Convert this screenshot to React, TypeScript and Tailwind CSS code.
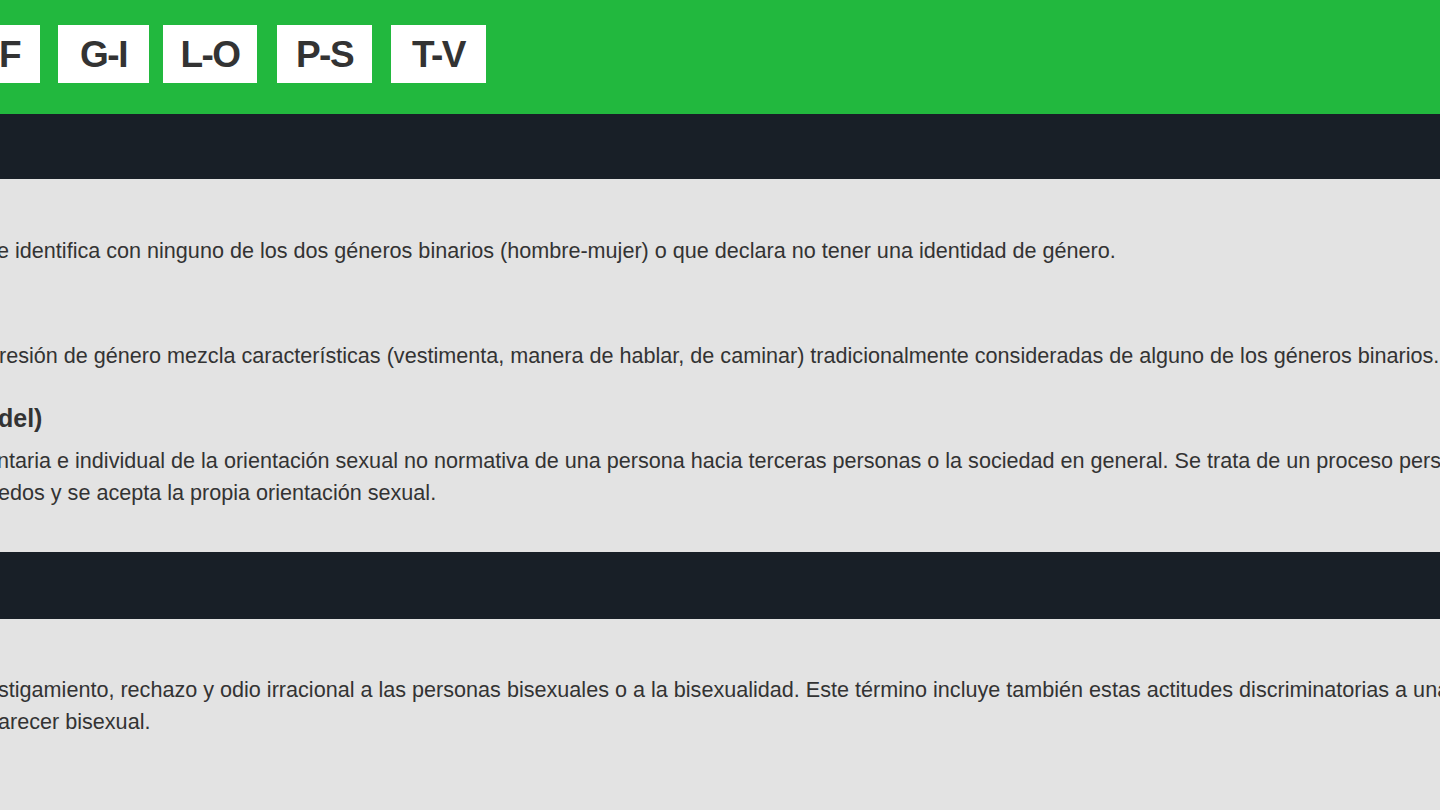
import React from "react";

const letters = [
  { label: "A-F", w: "w-[94px]", ml: "-ml-[54px]", first: true },
  { label: "G-I", w: "w-[91px]", ml: "ml-[18px]" },
  { label: "L-O", w: "w-[94px]", ml: "ml-[14px]" },
  { label: "P-S", w: "w-[95px]", ml: "ml-[20px]" },
  { label: "T-V", w: "w-[95px]", ml: "ml-[19px]" },
];

function LetterNav() {
  return (
    <nav className="h-[114px] bg-[#22b83e] flex items-start pt-[25px] overflow-hidden">
      {letters.map((l) => (
        <a
          key={l.label}
          href="#"
          className={`${l.w} ${l.ml} ${
            l.first ? "justify-end pr-[20px]" : "justify-center"
          } shrink-0 h-[58px] bg-white flex items-center text-[#333333] font-bold text-[37px] tracking-[-1.5px] leading-none`}
        >
          {l.label}
        </a>
      ))}
    </nav>
  );
}

export default function App() {
  return (
    <div
      className="w-[1440px] h-[810px] overflow-hidden bg-[#e3e3e3] text-[#333333]"
      style={{ fontFamily: '"Liberation Sans", Arial, sans-serif' }}
    >
      <LetterNav />
      <div className="h-[65px] bg-[#181f27]" />
      <section className="h-[373px] overflow-hidden whitespace-nowrap text-[21.6px] leading-[32px]">
        <p className="mt-[56px] -ml-[3px]">
          e identifica con ninguno de los dos géneros binarios (hombre-mujer) o que declara no tener una identidad de género.
        </p>
        <p className="mt-[73px] -ml-[1px]">
          resión de género mezcla características (vestimenta, manera de hablar, de caminar) tradicionalmente consideradas de alguno de los géneros binarios.
        </p>
        <h3 className="mt-[32px] -ml-[2px] font-bold text-[25px] leading-[28px]">del)</h3>
        <p className="mt-[13px] -ml-[3px]">
          ntaria e individual de la orientación sexual no normativa de una persona hacia terceras personas o la sociedad en general. Se trata de un proceso personal
        </p>
        <p className="-ml-[2px]">edos y se acepta la propia orientación sexual.</p>
      </section>
      <div className="h-[67px] bg-[#181f27]" />
      <section className="whitespace-nowrap text-[21.6px] leading-[32px]">
        <p className="mt-[55px] -ml-[2px]">
          stigamiento, rechazo y odio irracional a las personas bisexuales o a la bisexualidad. Este término incluye también estas actitudes discriminatorias a una
        </p>
        <p className="-ml-[2px]">arecer bisexual.</p>
      </section>
    </div>
  );
}
